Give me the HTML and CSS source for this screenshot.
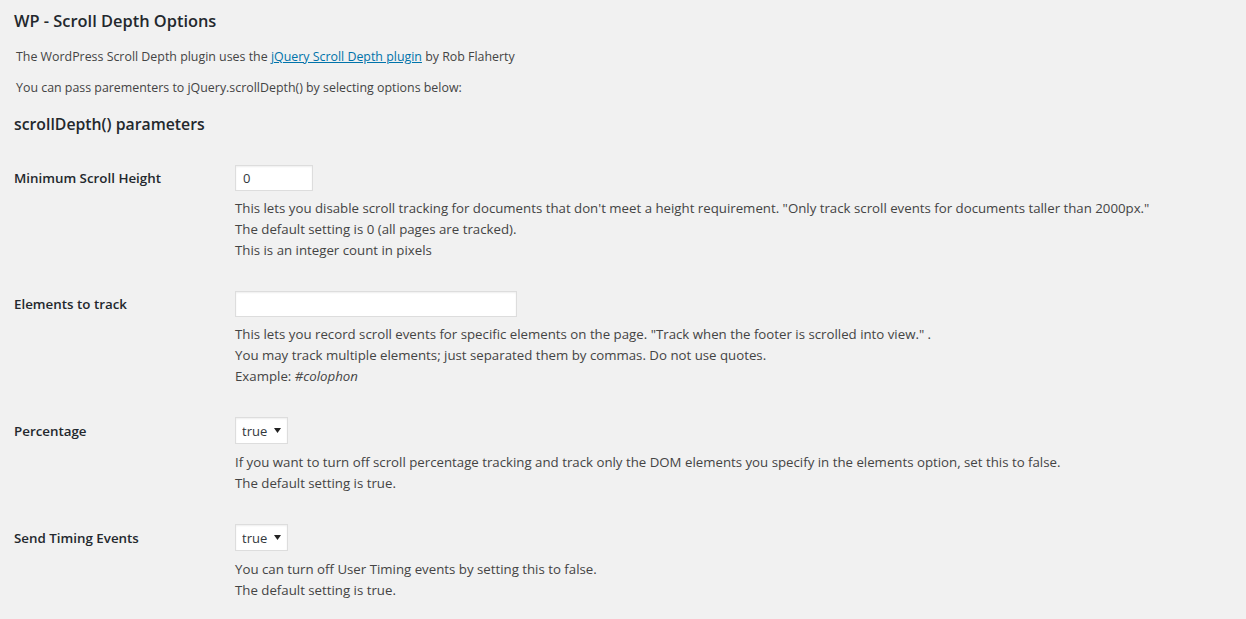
FILE: index.html
```html
<!DOCTYPE html>
<html lang="en">
<head>
<meta charset="utf-8">
<title>WP - Scroll Depth Options</title>
<link rel="stylesheet" href="styles.css">
</head>
<body>
<div class="wrap">
  <h2 class="title">WP - Scroll Depth Options</h2>
  <p class="intro">The WordPress Scroll Depth plugin uses the <a href="#">jQuery Scroll Depth plugin</a> by Rob Flaherty</p>
  <p class="intro">You can pass parementers to jQuery.scrollDepth() by selecting options below:</p>
  <h3 class="section">scrollDepth() parameters</h3>

  <div class="form-table">
    <div class="row">
      <div class="label">Minimum Scroll Height</div>
      <div class="field">
        <input class="text small" type="text" value="0">
        <p class="description">This lets you disable scroll tracking for documents that don't meet a height requirement. "Only track scroll events for documents taller than 2000px."<br>The default setting is 0 (all pages are tracked).<br>This is an integer count in pixels</p>
      </div>
    </div>
    <div class="row">
      <div class="label">Elements to track</div>
      <div class="field">
        <input class="text regular" type="text" value="">
        <p class="description">This lets you record scroll events for specific elements on the page. "Track when the footer is scrolled into view." .<br>You may track multiple elements; just separated them by commas. Do not use quotes.<br>Example: <em>#colophon</em></p>
      </div>
    </div>
    <div class="row">
      <div class="label label-select">Percentage</div>
      <div class="field">
        <span class="select-wrap">
          <select class="select"><option>true</option><option>false</option></select>
          <svg class="arrow" width="7" height="5" viewBox="0 0 7 5"><path d="M0 0h7L3.5 5z" fill="#222"/></svg>
        </span>
        <p class="description">If you want to turn off scroll percentage tracking and track only the DOM elements you specify in the elements option, set this to false.<br>The default setting is true.</p>
      </div>
    </div>
    <div class="row">
      <div class="label label-select">Send Timing Events</div>
      <div class="field">
        <span class="select-wrap">
          <select class="select"><option>true</option><option>false</option></select>
          <svg class="arrow" width="7" height="5" viewBox="0 0 7 5"><path d="M0 0h7L3.5 5z" fill="#222"/></svg>
        </span>
        <p class="description">You can turn off User Timing events by setting this to false.<br>The default setting is true.</p>
      </div>
    </div>
  </div>
</div>
</body>
</html>
```

FILE: styles.css
```css
html, body {
  margin: 0;
  padding: 0;
  background: #f1f1f1;
}
body {
  font-family: "Open Sans", "Noto Sans", sans-serif;
  font-size: 13px;
  color: #444;
}
.wrap {
  padding: 0 14px;
}
.title {
  margin: 0;
  padding-top: 9px;
  font-size: 16.4px;
  font-weight: 600;
  line-height: 24px;
  color: #23282d;
}
.intro {
  margin: 0;
  padding-left: 2px;
  font-size: 12.4px;
  line-height: 20px;
}
.title + .intro {
  margin-top: 14px;
}
.intro + .intro {
  margin-top: 11px;
}
.intro a {
  color: #0073aa;
  text-decoration: underline;
}
.section {
  margin: 14px 0 0;
  font-size: 15.8px;
  font-weight: 600;
  line-height: 24px;
  color: #23282d;
}
.form-table {
  margin-top: 14px;
}
.row {
  display: grid;
  grid-template-columns: 221px 1fr;
  padding: 15px 0 15px;
}
.label {
  padding-top: 4px;
  font-size: 13.35px;
  font-weight: 600;
  line-height: 18px;
  color: #23282d;
}
.label-select {
  padding-top: 5px;
}
.field {
  display: flex;
  flex-direction: column;
  align-items: flex-start;
}
.text {
  box-sizing: border-box;
  height: 26px;
  margin: 0;
  padding: 0 7px;
  border: 1px solid #ddd;
  background: #fff;
  box-shadow: inset 0 1px 2px rgba(0,0,0,.07);
  font-family: inherit;
  font-size: 13px;
  color: #32373c;
  outline: none;
}
.small { width: 78px; }
.regular { width: 282px; }
.select-wrap {
  position: relative;
  display: inline-block;
  margin-bottom: 1px;
}
.select {
  -webkit-appearance: none;
  appearance: none;
  box-sizing: border-box;
  width: 53px;
  height: 27px;
  margin: 0;
  padding: 0 0 0 6px;
  border: 1px solid #ddd;
  border-radius: 0;
  background: #fff;
  box-shadow: inset 0 1px 2px rgba(0,0,0,.07);
  font-family: inherit;
  font-size: 13px;
  color: #32373c;
  outline: none;
}
.arrow {
  position: absolute;
  right: 7px;
  top: 11px;
  pointer-events: none;
}
.description {
  margin: 7px 0 0;
  font-size: 13.25px;
  line-height: 21px;
  color: #444;
}
.description em {
  line-height: 0;
}
```
